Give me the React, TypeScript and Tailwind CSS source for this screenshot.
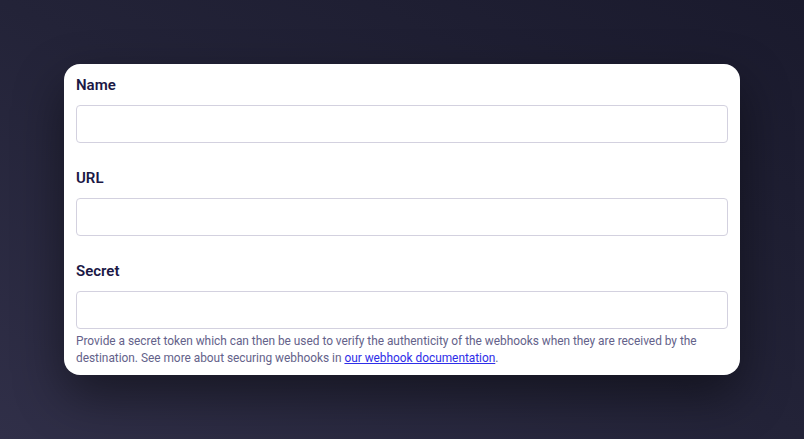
import React from "react";

function Field({ label }: { label: string }) {
  return (
    <div className="flex flex-col">
      <label className="text-[15px] leading-[22px] font-semibold text-[#1b1845]">{label}</label>
      <input
        type="text"
        className="mt-[9px] h-[38px] w-full rounded-[4px] border border-[#d3d1df] bg-white px-3 outline-none"
      />
    </div>
  );
}

export default function App() {
  return (
    <div
      className="flex h-[439px] w-full items-center justify-center bg-gradient-to-tr from-[#302f48] via-[#232338] to-[#1a1a2d] p-16"
      style={{ fontFamily: "Roboto, 'Liberation Sans', sans-serif" }}
    >
      <div className="flex w-full flex-col gap-6 rounded-2xl bg-white px-3 pt-[10px] pb-2 shadow-[0_20px_50px_rgba(0,0,0,0.45)]">
        <Field label="Name" />
        <Field label="URL" />
        <div className="flex flex-col">
          <label className="text-[15px] leading-[22px] font-semibold text-[#1b1845]">Secret</label>
          <input
            type="text"
            className="mt-[9px] h-[38px] w-full rounded-[4px] border border-[#d3d1df] bg-white px-3 outline-none"
          />
          <p className="mt-1 text-[11.9px] leading-[17px] tracking-[-0.02px] text-[#64628a]">
            Provide a secret token which can then be used to verify the authenticity of the webhooks when they are received by the destination. See more about securing webhooks in{" "}
            <a href="#" className="text-[#2e2ee8] underline">our webhook documentation</a>.
          </p>
        </div>
      </div>
    </div>
  );
}
